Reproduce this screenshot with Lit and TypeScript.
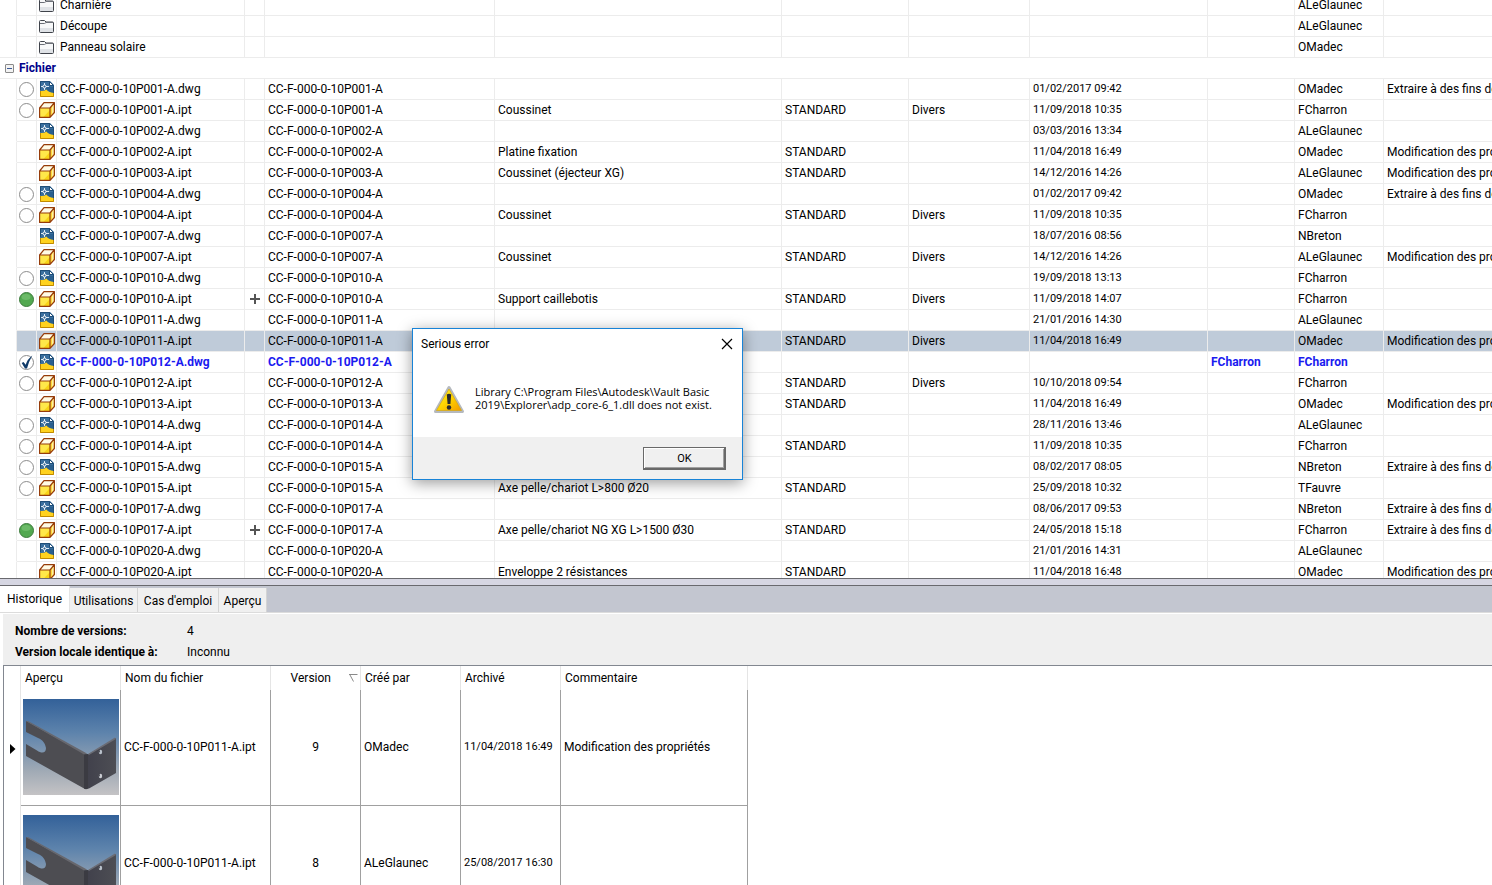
import { LitElement, html, css, svg, nothing } from "lit";
import { customElement, state } from "lit/decorators.js";
import { classMap } from "lit/directives/class-map.js";

type Status = "" | "open" | "green" | "checked";

interface VaultFile {
  status: Status;
  name: string;
  desc?: string;
  std?: boolean;
  divers?: boolean;
  date: string;
  by: string;
  comment?: string;
  selected?: boolean;
  reserved?: string;
  plus?: boolean;
}

const EXTRACT = "Extraire à des fins de modification";
const MODIF = "Modification des propriétés";

const FOLDERS = [
  { name: "Charnière", by: "ALeGlaunec" },
  { name: "Découpe", by: "ALeGlaunec" },
  { name: "Panneau solaire", by: "OMadec" },
];

const FILES: VaultFile[] = [
  { status: "open", name: "001-A.dwg", date: "01/02/2017 09:42", by: "OMadec", comment: EXTRACT },
  { status: "open", name: "001-A.ipt", desc: "Coussinet", std: true, divers: true, date: "11/09/2018 10:35", by: "FCharron" },
  { status: "", name: "002-A.dwg", date: "03/03/2016 13:34", by: "ALeGlaunec" },
  { status: "", name: "002-A.ipt", desc: "Platine fixation", std: true, date: "11/04/2018 16:49", by: "OMadec", comment: MODIF },
  { status: "", name: "003-A.ipt", desc: "Coussinet (éjecteur XG)", std: true, date: "14/12/2016 14:26", by: "ALeGlaunec", comment: MODIF },
  { status: "open", name: "004-A.dwg", date: "01/02/2017 09:42", by: "OMadec", comment: EXTRACT },
  { status: "open", name: "004-A.ipt", desc: "Coussinet", std: true, divers: true, date: "11/09/2018 10:35", by: "FCharron" },
  { status: "", name: "007-A.dwg", date: "18/07/2016 08:56", by: "NBreton" },
  { status: "", name: "007-A.ipt", desc: "Coussinet", std: true, divers: true, date: "14/12/2016 14:26", by: "ALeGlaunec", comment: MODIF },
  { status: "open", name: "010-A.dwg", date: "19/09/2018 13:13", by: "FCharron" },
  { status: "green", name: "010-A.ipt", plus: true, desc: "Support caillebotis", std: true, divers: true, date: "11/09/2018 14:07", by: "FCharron" },
  { status: "", name: "011-A.dwg", date: "21/01/2016 14:30", by: "ALeGlaunec" },
  { status: "", name: "011-A.ipt", selected: true, std: true, divers: true, date: "11/04/2018 16:49", by: "OMadec", comment: MODIF },
  { status: "checked", name: "012-A.dwg", date: "", reserved: "FCharron", by: "FCharron" },
  { status: "open", name: "012-A.ipt", std: true, divers: true, date: "10/10/2018 09:54", by: "FCharron" },
  { status: "", name: "013-A.ipt", std: true, date: "11/04/2018 16:49", by: "OMadec", comment: MODIF },
  { status: "open", name: "014-A.dwg", date: "28/11/2016 13:46", by: "ALeGlaunec" },
  { status: "open", name: "014-A.ipt", std: true, date: "11/09/2018 10:35", by: "FCharron" },
  { status: "open", name: "015-A.dwg", date: "08/02/2017 08:05", by: "NBreton", comment: EXTRACT },
  { status: "open", name: "015-A.ipt", desc: "Axe pelle/chariot L>800 Ø20", std: true, date: "25/09/2018 10:32", by: "TFauvre" },
  { status: "", name: "017-A.dwg", date: "08/06/2017 09:53", by: "NBreton", comment: EXTRACT },
  { status: "green", name: "017-A.ipt", plus: true, desc: "Axe pelle/chariot NG XG L>1500 Ø30", std: true, date: "24/05/2018 15:18", by: "FCharron", comment: EXTRACT },
  { status: "", name: "020-A.dwg", date: "21/01/2016 14:31", by: "ALeGlaunec" },
  { status: "", name: "020-A.ipt", desc: "Enveloppe 2 résistances", std: true, date: "11/04/2018 16:48", by: "OMadec", comment: MODIF },
];

const PREFIX = "CC-F-000-0-10P";
const TABS = ["Historique", "Utilisations", "Cas d'emploi", "Aperçu"];
const VERSIONS = [
  { version: 9, by: "OMadec", date: "11/04/2018 16:49", comment: "Modification des propriétés" },
  { version: 8, by: "ALeGlaunec", date: "25/08/2017 16:30", comment: "" },
];

const folderIcon = html`<svg class="icon" viewBox="0 0 16 16">
  <path d="M.5 13.500V3.500Q.5 2.500 1.500 2.500H5.500L7 4H13.500Q14.500 4 14.500 5V13.500Q14.500 14.500 13.500 14.500H1.500Q.5 14.500 .5 13.500Z" fill="#f7f8f9" stroke="#3f434a"/>
  <path d="M1 5.500H5.500L7 4.500H14" fill="none" stroke="#6c7078"/>
  <path d="M1 10H14V14H1Z" fill="#dfe2e6"/>
</svg>`;

const dwgIcon = html`<svg class="icon" viewBox="0 0 16 16">
  <path d="M1 0H11L15 4V12H1Z" fill="#3a6f9e"/>
  <path d="M1.500 9V.5H11" fill="none" stroke="#1f4e78"/>
  <path d="M7 6H14V13L7 9Z" fill="#2a5f8e"/>
  <path d="M1 10Q5 10.500 7.500 8.500Q9 11 15 12V16H1Z" fill="#ffd21e"/>
  <path d="M1.500 10V15.500H14.500V12" fill="none" stroke="#c08a00"/>
  <path d="M10.500 .5V4.500H14.500Z" fill="#fff" stroke="#1f4e78"/>
  <path d="M14.500 4.500V12" stroke="#1f4e78"/>
  <path d="M5.500 2V9M2 5.500H10" stroke="#dbe8f2" fill="none"/>
  <circle cx="5.500" cy="5.500" r="1.500" fill="#2a5f8e" stroke="#fff"/>
</svg>`;

const iptIcon = html`<svg class="icon" viewBox="0 0 16 16">
  <path d="M.6 6L5 .6H15.400L11 6Z" fill="#fffbe6"/>
  <path d="M.6 6H11V15.400H.6Z" fill="#ffe84a"/>
  <path d="M4 15.400L11 8V15.400Z" fill="#f8d418"/>
  <path d="M11 6L15.400 .6V10.500L11 15.400Z" fill="#ffd83a"/>
  <path d="M13 5L14.800 2.500V10L13 12.500Z" fill="#fff0a0"/>
  <path d="M.6 6L5 .6H15.400V10.500L11 15.400H.6ZM.6 6H11V15.400M11 6L15.400 .6" fill="none" stroke="#963c0a" stroke-width="1.200" stroke-linejoin="round"/>
</svg>`;

function statusIcon(s: Status) {
  if (!s) return nothing;
  const fill = s === "green" ? "#52a850" : "#fff";
  const stroke = s === "green" ? "#3c7a3c" : "#8c8c8c";
  return html`<svg class="icon" viewBox="0 0 16 16">
    <circle cx="7.500" cy="8.500" r="7" fill=${fill} stroke=${stroke}/>
    ${s === "green" ? svg`<ellipse cx="7" cy="6" rx="4.500" ry="3" fill="#6cba68"/>` : nothing}
    ${s === "checked"
      ? svg`<path d="M2.700 9L4.500 8L6.700 10.700Q8.500 5 13.300 1.500Q10 7 8 14.500H6Z" fill="#0f3a68"/>`
      : nothing}
  </svg>`;
}

const plusIcon = html`<svg class="icon" viewBox="0 0 16 16"><path d="M8 3V13M3 8H13" stroke="#555" stroke-width="2"/></svg>`;

const bracket = html`<svg class="thumb" viewBox="0 0 96 96" role="img" aria-label="Aperçu de la pièce">
  <defs>
    <linearGradient id="sky" x1="0" y1="0" x2="0" y2="1">
      <stop offset="0" stop-color="#336199"/><stop offset=".35" stop-color="#5d83ac"/>
      <stop offset=".75" stop-color="#a0aab5"/><stop offset="1" stop-color="#c4c3c5"/>
    </linearGradient>
    <linearGradient id="face" x1="0" y1="0" x2="1" y2="0">
      <stop offset="0" stop-color="#40404b"/><stop offset="1" stop-color="#4d4e54"/>
    </linearGradient>
  </defs>
  <rect width="96" height="96" fill="url(#sky)"/>
  <path d="M3 22L62 55V90L3 57V45L14 51.500C19 55 23 54 23 49C22 44 20 41 15 39L3 33Z" fill="#4d4d52"/>
  <path d="M3 22L5 22L64 54.500L62 56Z" fill="#67676d"/>
  <path d="M62 55.500L66 55L93 39V74L66 89.500L62 90Z" fill="url(#face)"/>
  <path d="M61 55.500L65 55V89.500Q63 91 61 89.500Z" fill="#3b3b42"/>
  <path d="M65 55L92 38.500L93 40L66 56Z" fill="#6b6c74"/>
  <ellipse cx="77.500" cy="53" rx="1.700" ry="2.200" fill="#b9c1cb"/>
  <ellipse cx="77.500" cy="77" rx="1.700" ry="2.200" fill="#c9ccd2"/>
  <path d="M76 52L77 51V54ZM76 76L77 75V78Z" fill="#2c2c33"/>
</svg>`;

const warningIcon = html`<svg class="warning" viewBox="0 0 32 32">
  <defs><linearGradient id="amber" x1="0" y1="0" x2="1" y2="1">
    <stop offset="0" stop-color="#fff23a"/><stop offset=".5" stop-color="#ffd500"/><stop offset="1" stop-color="#f29a00"/>
  </linearGradient></defs>
  <path d="M16 3.500L29.500 27.500H2.500Z" fill="#c9cdd2" stroke="#b5b9be" stroke-width="3" stroke-linejoin="round"/>
  <path d="M16 5L28.500 26.500H3.500Z" fill="url(#amber)" stroke="#d8a400" stroke-width=".6"/>
  <path d="M13.800 10.500Q16 9 18.200 10.500L17.400 20H14.600Z" fill="#2b2b2b"/>
  <circle cx="16" cy="23.500" r="2.200" fill="#2b2b2b"/>
</svg>`;

@customElement("app-root")
export class AppRoot extends LitElement {
  @state() private tab = 0;
  @state() private dialogOpen = true;

  static styles = css`
    :host {
      display: flex;
      flex-direction: column;
      position: relative;
      height: 100vh;
      overflow: hidden;
      background: #fff;
      color: #000;
      font: 12px/20px Roboto, "Segoe UI", "Liberation Sans", sans-serif;
    }
    * { box-sizing: border-box; }
    button { font: inherit; color: inherit; padding: 0; cursor: default; }
    svg { display: block; }
    table { border-collapse: separate; border-spacing: 0; table-layout: fixed; }
    td, th { padding: 0 0 0 3px; text-align: left; white-space: nowrap; overflow: hidden; font-weight: inherit; }

    .files { flex: 1 1 0; min-height: 0; overflow: hidden; }
    .files table { width: 100%; margin-top: -5px; }
    .files tr { height: 21px; }
    .files td, .files th { height: 21px; border-right: 1px solid #ececec; border-bottom: 1px solid #ececec; }
    .files td:last-child { border-right: 0; }
    .files .indent { border-bottom-color: transparent; }
    .files .last .indent { border-bottom-color: #ececec; }
    .files .pic { padding: 0 0 0 2px; }
    .files .group th { border-right: 0; padding: 0; border-bottom-color: #ececec; }
    .group-title { display: flex; align-items: center; gap: 5px; padding-left: 5px; color: #00008b; font-weight: bold; }
    .fold { width: 9px; height: 9px; border: 1px solid #8a8a8a; border-radius: 1px; background: #f3f3f3; display: grid; place-items: center; }
    .fold span { width: 5px; height: 1px; background: #3c5a96; }
    .selected td:not(.indent) { background: #bfcbd9; }
    .reserved { color: #1a1af0; font-weight: bold; }
    .date { font-size: 11px; }
    .icon { width: 16px; height: 16px; }
    .c-indent { width: 17px; } .c-icon { width: 20px; } .c-name { width: 188px; } .c-number { width: 230px; }
    .c-desc { width: 287px; } .c-std { width: 127px; } .c-cat { width: 121px; } .c-date { width: 178px; }
    .c-res { width: 87px; } .c-by { width: 89px; }

    .splitter { flex: none; height: 8px; background: #d6d6e2; border: solid #69696e; border-width: 1px 0; }
    .details { flex: none; height: 299px; display: flex; flex-direction: column; }
    .tabs { display: flex; align-items: flex-end; flex: none; height: 27px; background: #c3c6d0; border-bottom: 1px solid #dcdcdc; }
    .tabs button { height: 24px; padding-top: 2px; border: 0; border-right: 1px solid #d4d4d4; background: #f0f0f0; }
    .tabs button.active { height: 26px; padding-top: 0; background: #fff; border-right-color: #e4e4e4; }
    .t0 { width: 70px; } .t1 { width: 68px; } .t2 { width: 81px; } .t3 { width: 48px; }
    .summary { flex: none; margin: 1px 0 0 3px; padding: 7px 12px 2px; background: #efefef; display: grid; grid-template-columns: 172px 1fr; line-height: 21px; }
    .summary dt { font-weight: bold; }
    dl, dd { margin: 0; }
    .history { flex: 1; min-height: 0; overflow: hidden; margin-left: 3px; border: solid #828790; border-width: 1px 0 0 1px; }
    .history table { width: 744px; }
    .history th { height: 24px; padding-left: 4px; border-right: 1px solid #e5e5e5; }
    .history td { height: 116px; padding-bottom: 2px; border-right: 1px solid #a0a0a0; border-bottom: 1px solid #a0a0a0; }
    .history .mark { border-right-color: #e5e5e5; border-bottom: 0; padding: 1px 0 0 6px; }
    .history .shot { padding: 0 0 2px 2px; }
    .history .num { text-align: center; padding: 0 0 2px; }
    .sortable { display: flex; align-items: center; justify-content: flex-end; gap: 18px; padding-right: 2px; }
    .thumb { width: 96px; height: 96px; }
    .h-mark { width: 17px; } .h-100 { width: 100px; } .h-name { width: 150px; } .h-ver { width: 90px; } .h-com { width: 187px; }

    .dialog {
      position: absolute; left: 412px; top: 328px; width: 331px;
      background: #fff; border: 1px solid #1883d7; box-shadow: 0 3px 14px rgba(0, 0, 0, .4);
    }
    .dialog header { display: flex; align-items: center; justify-content: space-between; height: 29px; padding: 0 9px 0 8px; }
    .dialog h2 { margin: 0; font: inherit; }
    .close { width: 12px; height: 12px; border: 0; background: none; }
    .close svg { width: 12px; height: 12px; }
    .body { display: flex; align-items: center; gap: 10px; height: 79px; padding: 4px 20px 0; }
    .body p { margin: 0; font: 11px/13px "Open Sans", "Noto Sans", sans-serif; white-space: nowrap; padding-bottom: 3px; }
    .warning { width: 32px; height: 32px; flex: none; }
    .dialog footer { display: flex; justify-content: flex-end; padding: 10px 16px 9px; background: #f0f0f0; }
    .ok { width: 83px; height: 23px; padding: 1px 0 0 1px; border: solid #696969; border-width: 1px 2px 2px 1px; background: #f0f0f0; box-shadow: inset 1px 1px #fff, inset -1px -1px #a0a0a0; font-size: 11px; line-height: 18px; }
  `;

  private fileRow(f: VaultFile) {
    const text = classMap({ reserved: !!f.reserved });
    const base = PREFIX + f.name;
    return html`<tr class=${classMap({ selected: !!f.selected })}>
      <td class="indent"></td>
      <td class="pic">${statusIcon(f.status)}</td>
      <td class="pic">${f.name.endsWith("dwg") ? dwgIcon : iptIcon}</td>
      <td class=${text}>${base}</td>
      <td class="pic">${f.plus ? plusIcon : nothing}</td>
      <td class=${text}>${base.slice(0, -4)}</td>
      <td>${f.desc ?? ""}</td>
      <td>${f.std ? "STANDARD" : ""}</td>
      <td>${f.divers ? "Divers" : ""}</td>
      <td class="date">${f.date}</td>
      <td class=${text}>${f.reserved ?? ""}</td>
      <td class=${text}>${f.by}</td>
      <td>${f.comment ?? ""}</td>
    </tr>`;
  }

  render() {
    return html`
      <section class="files">
        <table>
          <colgroup>
            <col class="c-indent"><col class="c-icon"><col class="c-icon"><col class="c-name"><col class="c-icon">
            <col class="c-number"><col class="c-desc"><col class="c-std"><col class="c-cat"><col class="c-date">
            <col class="c-res"><col class="c-by"><col>
          </colgroup>
          <tbody>
            ${FOLDERS.map((f, i) => html`<tr class=${classMap({ last: i === FOLDERS.length - 1 })}>
              <td class="indent"></td><td></td><td class="pic">${folderIcon}</td><td>${f.name}</td>
              <td></td><td></td><td></td><td></td><td></td><td></td><td></td><td>${f.by}</td><td></td>
            </tr>`)}
            <tr class="group"><th colspan="13" scope="rowgroup">
              <div class="group-title"><span class="fold"><span></span></span>Fichier</div>
            </th></tr>
            ${FILES.map((f) => this.fileRow(f))}
          </tbody>
        </table>
      </section>

      <div class="splitter"></div>

      <section class="details">
        <div class="tabs" role="tablist">
          ${TABS.map((t, i) => html`<button role="tab" aria-selected=${i === this.tab}
            class=${`t${i} ${i === this.tab ? "active" : ""}`} @click=${() => (this.tab = i)}>${t}</button>`)}
        </div>
        <dl class="summary">
          <dt>Nombre de versions:</dt><dd>4</dd>
          <dt>Version locale identique à:</dt><dd>Inconnu</dd>
        </dl>
        <div class="history">
          <table>
            <colgroup>
              <col class="h-mark"><col class="h-100"><col class="h-name"><col class="h-ver">
              <col class="h-100"><col class="h-100"><col class="h-com">
            </colgroup>
            <thead><tr>
              <th></th><th>Aperçu</th><th>Nom du fichier</th>
              <th><div class="sortable">Version<svg width="9" height="8" viewBox="0 0 9 8"><path d="M0 .5H8.500M1 1L4.500 7.500" fill="none" stroke="#8a8a8a"/></svg></div></th>
              <th>Créé par</th><th>Archivé</th><th>Commentaire</th>
            </tr></thead>
            <tbody>
              ${VERSIONS.map((v, i) => html`<tr>
                <td class="mark">${i === 0 ? html`<svg width="6" height="10" viewBox="0 0 6 10"><path d="M0 0L5.500 5L0 10Z"/></svg>` : nothing}</td>
                <td class="shot">${bracket}</td>
                <td>CC-F-000-0-10P011-A.ipt</td>
                <td class="num">${v.version}</td>
                <td>${v.by}</td>
                <td class="date">${v.date}</td>
                <td>${v.comment}</td>
              </tr>`)}
            </tbody>
          </table>
        </div>
      </section>

      ${this.dialogOpen ? html`<div class="dialog" role="alertdialog" aria-labelledby="dlg-title" aria-describedby="dlg-text">
        <header>
          <h2 id="dlg-title">Serious error</h2>
          <button class="close" aria-label="Fermer" @click=${() => (this.dialogOpen = false)}>
            <svg viewBox="0 0 12 12"><path d="M1 1L11 11M11 1L1 11" stroke="#000" stroke-width="1.200"/></svg>
          </button>
        </header>
        <div class="body">
          ${warningIcon}
          <p id="dlg-text">Library C:\\Program Files\\Autodesk\\Vault Basic<br>2019\\Explorer\\adp_core-6_1.dll does not exist.</p>
        </div>
        <footer><button class="ok" @click=${() => (this.dialogOpen = false)}>OK</button></footer>
      </div>` : nothing}
    `;
  }
}
